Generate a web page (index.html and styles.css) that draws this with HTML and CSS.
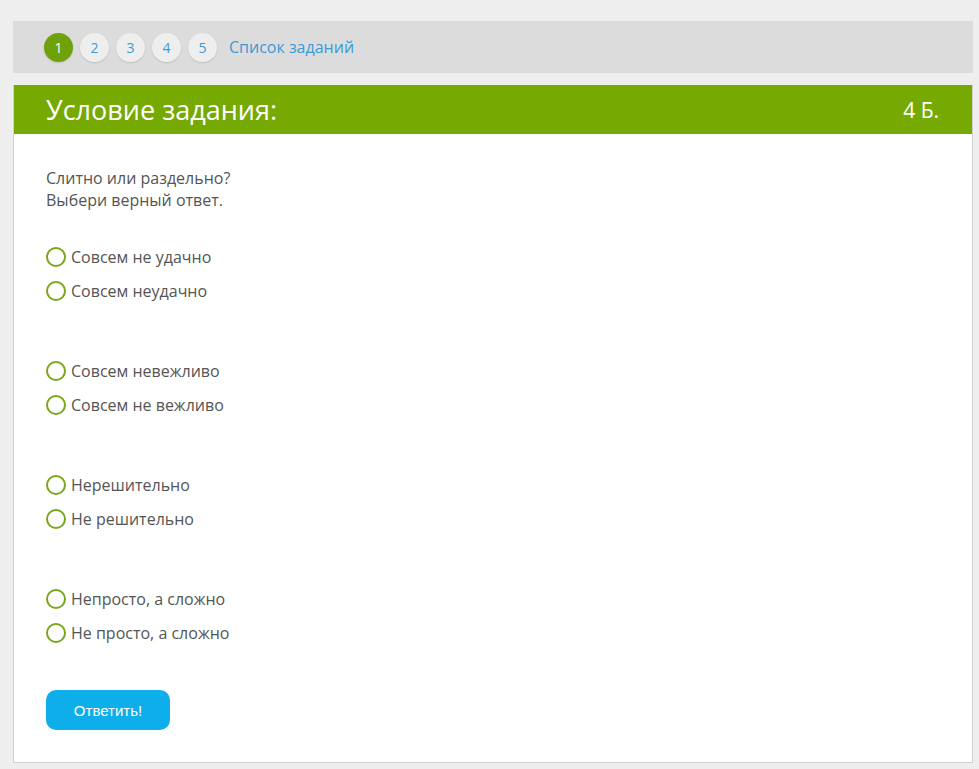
FILE: index.html
```html
<!DOCTYPE html>
<html lang="ru">

<head>
    <meta charset="UTF-8">
    <title>Тест</title>
    <link rel="stylesheet" href="styles.css">
</head>

<body>
    <div class="nav">
        <span class="num active">1</span>
        <span class="num">2</span>
        <span class="num">3</span>
        <span class="num">4</span>
        <span class="num">5</span>
        <a class="list-link" href="#">Список заданий</a>
    </div>

    <div class="card">
        <div class="head">
            <div class="title">Условие задания:</div>
            <div class="score">4 Б.</div>
        </div>
        <div class="body">
            <p class="question">Слитно или раздельно?<br>Выбери верный ответ.</p>

            <div class="group">
                <label class="opt"><span class="radio"></span>Совсем не удачно</label>
                <label class="opt"><span class="radio"></span>Совсем неудачно</label>
            </div>
            <div class="group">
                <label class="opt"><span class="radio"></span>Совсем невежливо</label>
                <label class="opt"><span class="radio"></span>Совсем не вежливо</label>
            </div>
            <div class="group">
                <label class="opt"><span class="radio"></span>Нерешительно</label>
                <label class="opt"><span class="radio"></span>Не решительно</label>
            </div>
            <div class="group">
                <label class="opt"><span class="radio"></span>Непросто, а сложно</label>
                <label class="opt"><span class="radio"></span>Не просто, а сложно</label>
            </div>

            <button class="answer">Ответить!</button>
        </div>
    </div>
</body>

</html>
```

FILE: styles.css
```css
body {
    margin: 0;
    padding: 21px 6px 0 13px;
    background-color: #eeeeee;
    font-family: "Open Sans", "Noto Sans", sans-serif;
    color: #555555;
}

.nav {
    display: flex;
    align-items: center;
    gap: 7px;
    height: 52px;
    padding-left: 31px;
    background-color: #dcdcdc;
}

.num {
    display: flex;
    align-items: center;
    justify-content: center;
    width: 29px;
    height: 29px;
    border-radius: 50%;
    background-color: #eeeeee;
    box-shadow: 0 1px 2px rgba(0, 0, 0, 0.12);
    color: #3d9ad6;
    font-size: 14px;
}

.num.active {
    background-color: #6fa10b;
    color: #ffffff;
}

.list-link {
    margin-left: 5px;
    color: #3d9ad6;
    font-size: 16px;
    text-decoration: none;
}

.card {
    margin-top: 12px;
    background-color: #ffffff;
    border: 1px solid #d0d0d0;
    border-top: none;
}

.head {
    display: flex;
    align-items: center;
    justify-content: space-between;
    height: 49px;
    padding: 0 33px 0 32px;
    background-color: #76aa02;
    color: #ffffff;
}

.title {
    font-size: 27px;
}

.score {
    font-size: 21px;
}

.body {
    padding: 33px 32px 32px;
}

.question {
    margin: 0 0 35px;
    font-size: 16px;
    line-height: 22px;
}

.group {
    display: flex;
    flex-direction: column;
    gap: 12px;
    margin-bottom: 58px;
}

.group:last-of-type {
    margin-bottom: 46px;
}

.opt {
    display: flex;
    align-items: center;
    gap: 5px;
    height: 22px;
    font-size: 16px;
}

.radio {
    box-sizing: border-box;
    width: 20px;
    height: 20px;
    border: 2px solid #7aa61c;
    border-radius: 50%;
}

.answer {
    width: 124px;
    height: 40px;
    border: none;
    border-radius: 10px;
    background-color: #0daeea;
    color: #ffffff;
    font-family: "Liberation Sans", Arial, sans-serif;
    font-size: 15px;
}
```
